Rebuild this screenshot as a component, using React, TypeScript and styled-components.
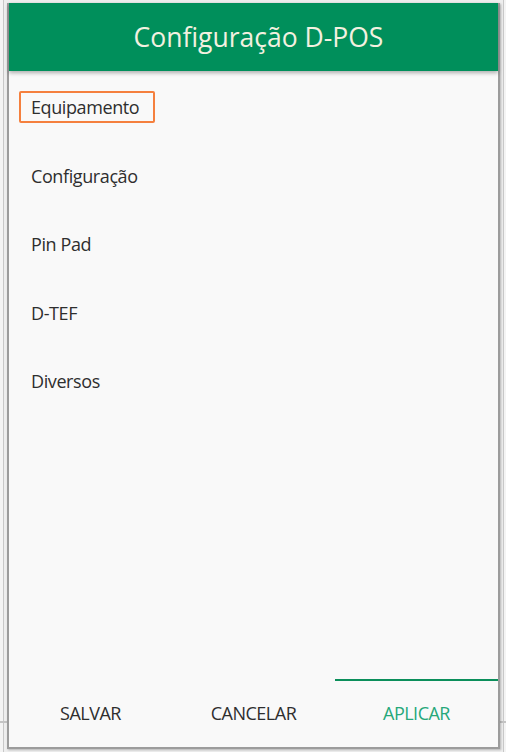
import styled, { createGlobalStyle } from 'styled-components'

const GlobalStyle = createGlobalStyle`
  html, body {
    margin: 0;
    padding: 0;
    background: #ececec;
  }
  body {
    font-family: 'Open Sans', 'Liberation Sans', sans-serif;
  }
`

const Page = styled.div`
  width: 506px;
  height: 752px;
  box-sizing: border-box;
  padding: 3px 6px 3px 7px;
  display: flex;
  background:
    linear-gradient(to bottom, transparent 721px, #c4c4c4 721px 723px, transparent 723px),
    linear-gradient(to right, #f4f4f4 0 3px, #c8c8c8 3px 4px, #eeeeee 4px 503px, #c8c8c8 503px 504px, #f4f4f4 504px);
`

const Dialog = styled.div`
  flex: 1;
  display: flex;
  flex-direction: column;
  background: #f9f9f9;
  border: 2px solid #9c9c9c;
  border-top: none;
  box-shadow: 1px 1px 2px rgba(0, 0, 0, 0.25);
`

const Header = styled.div`
  height: 68px;
  flex-shrink: 0;
  display: flex;
  align-items: center;
  justify-content: center;
  padding-left: 10px;
  background: #008f5b;
  color: #f3f1e0;
  font-size: 26.5px;
  box-shadow: 0 2px 4px rgba(0, 0, 0, 0.3);
  position: relative;
  z-index: 1;
`

const Menu = styled.ul`
  list-style: none;
  margin: 0;
  padding: 20px 0 0 10px;
  flex: 1;
  display: flex;
  flex-direction: column;
  gap: 36.5px;
`

const MenuItem = styled.li<{ $selected?: boolean }>`
  align-self: flex-start;
  height: 32px;
  box-sizing: border-box;
  padding: 0 10px;
  display: flex;
  align-items: center;
  font-size: 18px;
  font-weight: 500;
  letter-spacing: -0.4px;
  color: #2e2e2e;
  border: 2px solid ${(p) => (p.$selected ? '#f5803e' : 'transparent')};
  border-radius: 2px;
  min-width: 136px;
`

const Footer = styled.div`
  display: grid;
  grid-template-columns: repeat(3, 1fr);
  height: 68px;
  flex-shrink: 0;
`

const Action = styled.div<{ $active?: boolean }>`
  display: flex;
  align-items: center;
  justify-content: center;
  padding-bottom: 2px;
  font-size: 18px;
  font-weight: 500;
  letter-spacing: -0.5px;
  color: ${(p) => (p.$active ? '#26a87a' : '#2e2e2e')};
  border-top: 2px solid ${(p) => (p.$active ? '#0b8f5b' : 'transparent')};
`

const items = ['Equipamento', 'Configuração', 'Pin Pad', 'D-TEF', 'Diversos']
const actions = ['SALVAR', 'CANCELAR', 'APLICAR']

export default function App() {
  return (
    <>
      <GlobalStyle />
      <Page>
        <Dialog>
          <Header>Configuração D-POS</Header>
          <Menu>
            {items.map((item, i) => (
              <MenuItem key={item} $selected={i === 0}>
                {item}
              </MenuItem>
            ))}
          </Menu>
          <Footer>
            {actions.map((action) => (
              <Action key={action} $active={action === 'APLICAR'}>
                {action}
              </Action>
            ))}
          </Footer>
        </Dialog>
      </Page>
    </>
  )
}
